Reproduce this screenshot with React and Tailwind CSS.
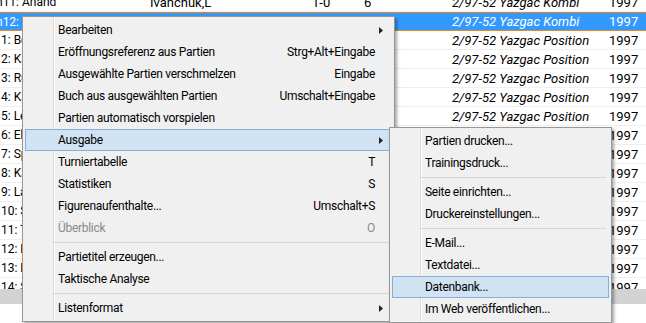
// Game list with context menu and "Ausgabe" submenu open

const players = [
  "Bologan", "Kamsky", "Rublevsky", "Kasparov", "Leko", "Ehlvest", "Spassky",
  "Karpov", "Lautier", "Shirov", "Topalov", "Kramnik", "Lputian", "Svidler",
];

const mainItems = [
  { label: "Bearbeiten", arrow: true },
  { label: "Eröffnungsreferenz aus Partien", shortcut: "Strg+Alt+Eingabe" },
  { label: "Ausgewählte Partien verschmelzen", shortcut: "Eingabe" },
  { label: "Buch aus ausgewählten Partien", shortcut: "Umschalt+Eingabe" },
  { label: "Partien automatisch vorspielen" },
  { label: "Ausgabe", arrow: true, active: true },
  { label: "Turniertabelle", shortcut: "T" },
  { label: "Statistiken", shortcut: "S" },
  { label: "Figurenaufenthalte...", shortcut: "Umschalt+S" },
  { label: "Überblick", shortcut: "O", disabled: true },
  { sep: true },
  { label: "Partietitel erzeugen..." },
  { label: "Taktische Analyse" },
  { sep: true },
  { label: "Listenformat", arrow: true },
];

const subItems = [
  { label: "Partien drucken..." },
  { label: "Trainingsdruck..." },
  { sep: true },
  { label: "Seite einrichten..." },
  { label: "Druckereinstellungen..." },
  { sep: true },
  { label: "E-Mail..." },
  { label: "Textdatei..." },
  { label: "Datenbank...", active: true },
  { label: "Im Web veröffentlichen..." },
];

function Row({ c1, c2, c3, c4, c5, c6, selected, first }) {
  return (
    <div
      className={
        selected
          ? "flex h-[19px] items-center border-y border-[#e8891c] bg-[#3399ff] text-white"
          : "flex h-[19px] items-center border-b border-[#efefef]"
      }
    >
      <div className={first ? "w-[154px] shrink-0 -ml-[4px] text-[12px] whitespace-nowrap" : "w-[150px] shrink-0 pl-[1px] text-[12px] whitespace-nowrap"}>{c1}</div>
      <div className="w-[162px] shrink-0 whitespace-nowrap">{c2}</div>
      <div className="w-[52px] shrink-0">{c3}</div>
      <div className="w-[88px] shrink-0">{c4}</div>
      <div className="w-[157px] shrink-0 italic whitespace-nowrap">{c5}</div>
      <div className="flex-1">{c6}</div>
    </div>
  );
}

function Arrow() {
  return (
    <svg width="4" height="7" viewBox="0 0 4 7" className="block">
      <path d="M0 0 L4 3.5 L0 7 Z" fill="#222" />
    </svg>
  );
}

function Menu({ items, className }) {
  return (
    <div className={"absolute border border-[#979797] bg-[#f0f0f0] p-[2px] text-[12px] tracking-[-0.3px] shadow-[2px_2px_3px_rgba(0,0,0,0.35)] " + className}>
      <div className="absolute top-0 bottom-0 left-[30px] w-px bg-[#dcdcdc]" />
      <div className="absolute top-0 bottom-0 left-[31px] w-px bg-white" />
      {items.map((it, i) =>
        it.sep ? (
          <div key={i} className="relative flex h-[7px] items-center pl-[28px] pr-[3px]">
            <div className="h-px w-full bg-[#d7d7d7]" />
          </div>
        ) : (
          <div
            key={i}
            className={
              "relative flex h-[22px] items-center border pl-[32px] whitespace-nowrap " +
              (it.active ? "border-[#84b0de] bg-[#d1e2f2] " : "border-transparent ") +
              (it.disabled ? "text-[#8a8a8a]" : "text-black")
            }
          >
            <span className="flex-1">{it.label}</span>
            {it.shortcut && <span>{it.shortcut}</span>}
            <span className="flex w-[16px] shrink-0 pl-[4px]">{it.arrow && <Arrow />}</span>
          </div>
        )
      )}
    </div>
  );
}

export default function App() {
  return (
    <div className="relative h-[323px] w-[646px] overflow-hidden bg-white font-['Roboto',sans-serif] text-[13px] leading-none text-black">
      <div className="h-[289px] overflow-hidden">
        <div className="-mt-[7px]">
          <Row first c1="n11: Anand" c2="Ivanchuk,L" c3="1-0" c4="6" c5="2/97-52 Yazgac Kombi" c6="1997" />
          <Row first selected c1="n12:" c5="2/97-52 Yazgac Kombi" c6="1997" />
          {players.map((p, i) => (
            <Row key={p} c1={`${i + 1}: ${p}`} c5="2/97-52 Yazgac Position" c6="1997" />
          ))}
        </div>
      </div>
      <div className="h-[15px] bg-[#d3d3d3]" />

      <Menu items={mainItems} className="left-[22px] top-[16px] w-[373px]" />
      <Menu items={subItems} className="left-[389px] top-[127px] w-[223px]" />
    </div>
  );
}
